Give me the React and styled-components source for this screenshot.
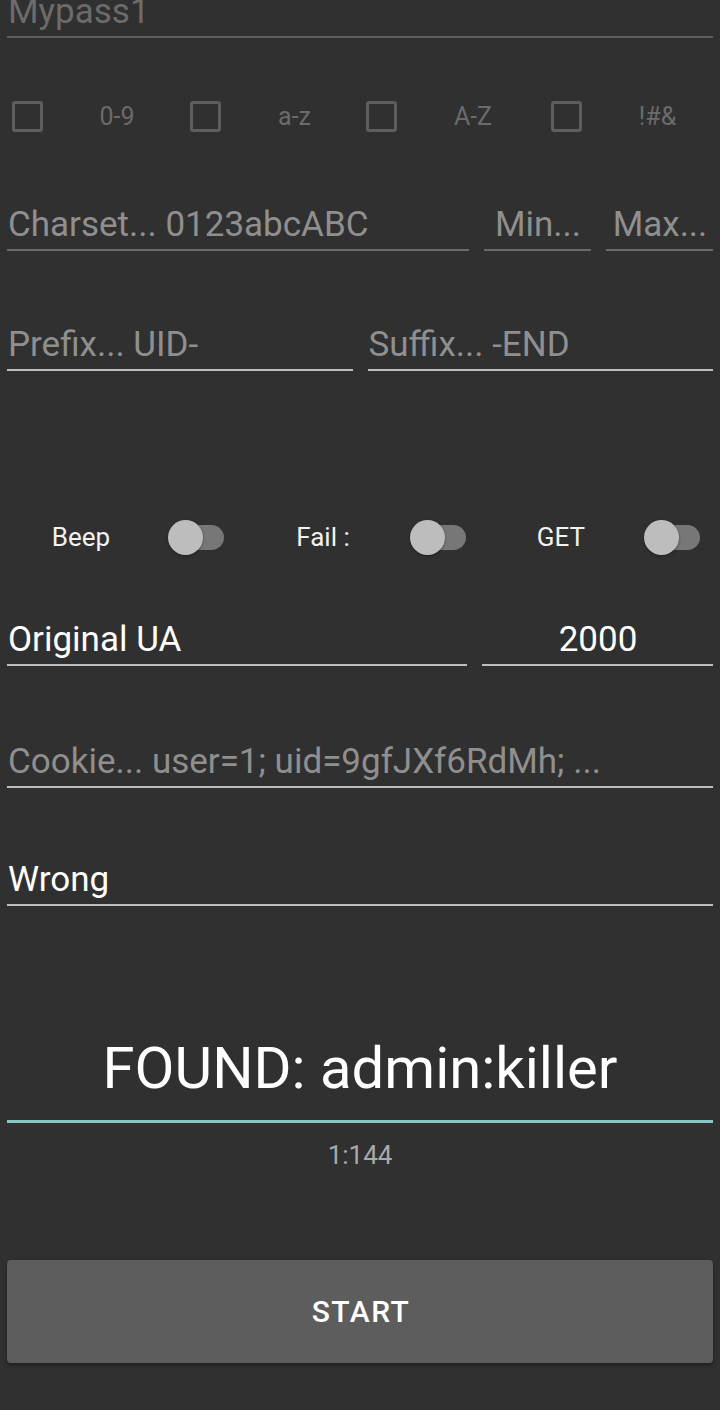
import React from 'react';
import styled, { createGlobalStyle } from 'styled-components';

const GlobalStyle = createGlobalStyle`
    html, body {
        margin: 0;
        padding: 0;
        background: #303030;
    }
    body {
        font-family: Roboto, "Noto Sans", "Liberation Sans", sans-serif;
        overflow: hidden;
    }
`

const Screen = styled.div`
    width: 720px;
    height: 1410px;
    background: #303030;
    box-sizing: border-box;
    padding: 0 7px;
    display: flex;
    flex-direction: column;
    overflow: hidden;
`

const Field = styled.div`
    font-size: 35px;
    line-height: 44px;
    height: 44px;
    padding-top: 2px;
    padding-bottom: 2px;
    white-space: nowrap;
    overflow: hidden;
    color: ${props => props.color || '#8f8f8f'};
    text-align: ${props => props.align || 'left'};
    border-bottom: 2px solid ${props => props.line || '#bdbdbd'};
    margin-top: ${props => props.top || 0}px;
    padding-left: 1px;
`

const Row = styled.div`
    display: grid;
    grid-template-columns: ${props => props.cols};
    column-gap: 15px;
    margin-top: ${props => props.top || 0}px;
`

const CheckRow = styled.div`
    display: grid;
    grid-template-columns: 178px 177px 181px 184px;
    height: 60px;
    margin: ${props => props.top}px -7px 0;
`

const CheckCell = styled.div`
    display: flex;
    align-items: center;
    padding-left: ${props => props.pad}px;
`

const Box = styled.div`
    width: 25px;
    height: 25px;
    border: 3px solid #5e5e5e;
    border-radius: 3px;
    flex-shrink: 0;
`

const CheckLabel = styled.span`
    flex: 1;
    text-align: center;
    padding-left: 13px;
    font-size: 25px;
    color: #6b6b6b;
`

const SwitchRow = styled.div`
    display: grid;
    grid-template-columns: repeat(3, 1fr);
    height: 50px;
    margin: ${props => props.top}px -7px 0;
`

const SwitchCell = styled.div`
    display: flex;
    align-items: center;
`

const SwitchLabel = styled.span`
    flex: 0 0 162px;
    text-align: center;
    font-size: 26px;
    color: #f2f2f2;
    padding-left: ${props => props.shift || 0}px;
    box-sizing: border-box;
`

const Switch = styled.div`
    position: relative;
    width: 56px;
    height: 35px;
    margin-left: ${props => props.gap}px;
`

const Track = styled.div`
    position: absolute;
    left: 8px;
    top: 5px;
    width: 48px;
    height: 25px;
    border-radius: 13px;
    background: #777777;
`

const Thumb = styled.div`
    position: absolute;
    left: 0;
    top: 0;
    width: 35px;
    height: 35px;
    border-radius: 50%;
    background: #bdbdbd;
    box-shadow: 0 1px 3px rgba(0, 0, 0, 0.35);
`

const Found = styled.div`
    margin-top: ${props => props.top}px;
    font-size: 58px;
    line-height: 72px;
    height: 72px;
    padding-bottom: 16px;
    color: #ffffff;
    text-align: center;
    white-space: nowrap;
    border-bottom: 3px solid #80cbc4;
`

const Counter = styled.div`
    margin-top: 16px;
    font-size: 26px;
    line-height: 32px;
    color: #a9a9a9;
    text-align: center;
`

const Button = styled.div`
    margin-top: 89px;
    height: 103px;
    background: #5d5d5e;
    border-radius: 4px;
    box-shadow: 0 2px 4px rgba(0, 0, 0, 0.35);
    display: flex;
    align-items: center;
    justify-content: center;
    color: #ffffff;
    font-size: 30px;
    font-weight: 500;
    letter-spacing: 0.05em;
    padding-left: 2px;
`

const checks = [
    { label: '0-9', pad: 12 },
    { label: 'a-z', pad: 12 },
    { label: 'A-Z', pad: 11 },
    { label: '!#&', pad: 15 },
];
const switches = [
    { label: 'Beep', shift: 0, gap: 6 },
    { label: 'Fail :', shift: 4, gap: 8 },
    { label: 'GET', shift: 0, gap: 2 },
];

const App = () =>
    <Screen>
        <GlobalStyle />
        <Field top={-12} color={'#6b6b6b'} line={'#5f5f5f'}>Mypass1</Field>

        <CheckRow top={48}>
            {checks.map(c =>
                <CheckCell key={c.label} pad={c.pad}>
                    <Box />
                    <CheckLabel>{c.label}</CheckLabel>
                </CheckCell>
            )}
        </CheckRow>

        <Row cols={'1fr 107px 107px'} top={55}>
            <Field line={'#6a6a6a'}>Charset... 0123abcABC</Field>
            <Field line={'#6a6a6a'} align={'center'}>Min...</Field>
            <Field line={'#6a6a6a'} align={'center'}>Max...</Field>
        </Row>

        <Row cols={'1fr 1fr'} top={70}>
            <Field>Prefix... UID-</Field>
            <Field>Suffix... -END</Field>
        </Row>

        <SwitchRow top={141}>
            {switches.map(s =>
                <SwitchCell key={s.label}>
                    <SwitchLabel shift={s.shift}>{s.label}</SwitchLabel>
                    <Switch gap={s.gap}>
                        <Track />
                        <Thumb />
                    </Switch>
                </SwitchCell>
            )}
        </SwitchRow>

        <Row cols={'1fr 231px'} top={54}>
            <Field color={'#ffffff'}>Original UA</Field>
            <Field color={'#ffffff'} align={'center'}>2000</Field>
        </Row>

        <Field top={72}>Cookie... user=1; uid=9gfJXf6RdMh; ...</Field>

        <Field top={68} color={'#ffffff'}>Wrong</Field>

        <Found top={126}>FOUND: admin:killer</Found>
        <Counter>1:144</Counter>

        <Button>START</Button>
    </Screen>

export default App;
